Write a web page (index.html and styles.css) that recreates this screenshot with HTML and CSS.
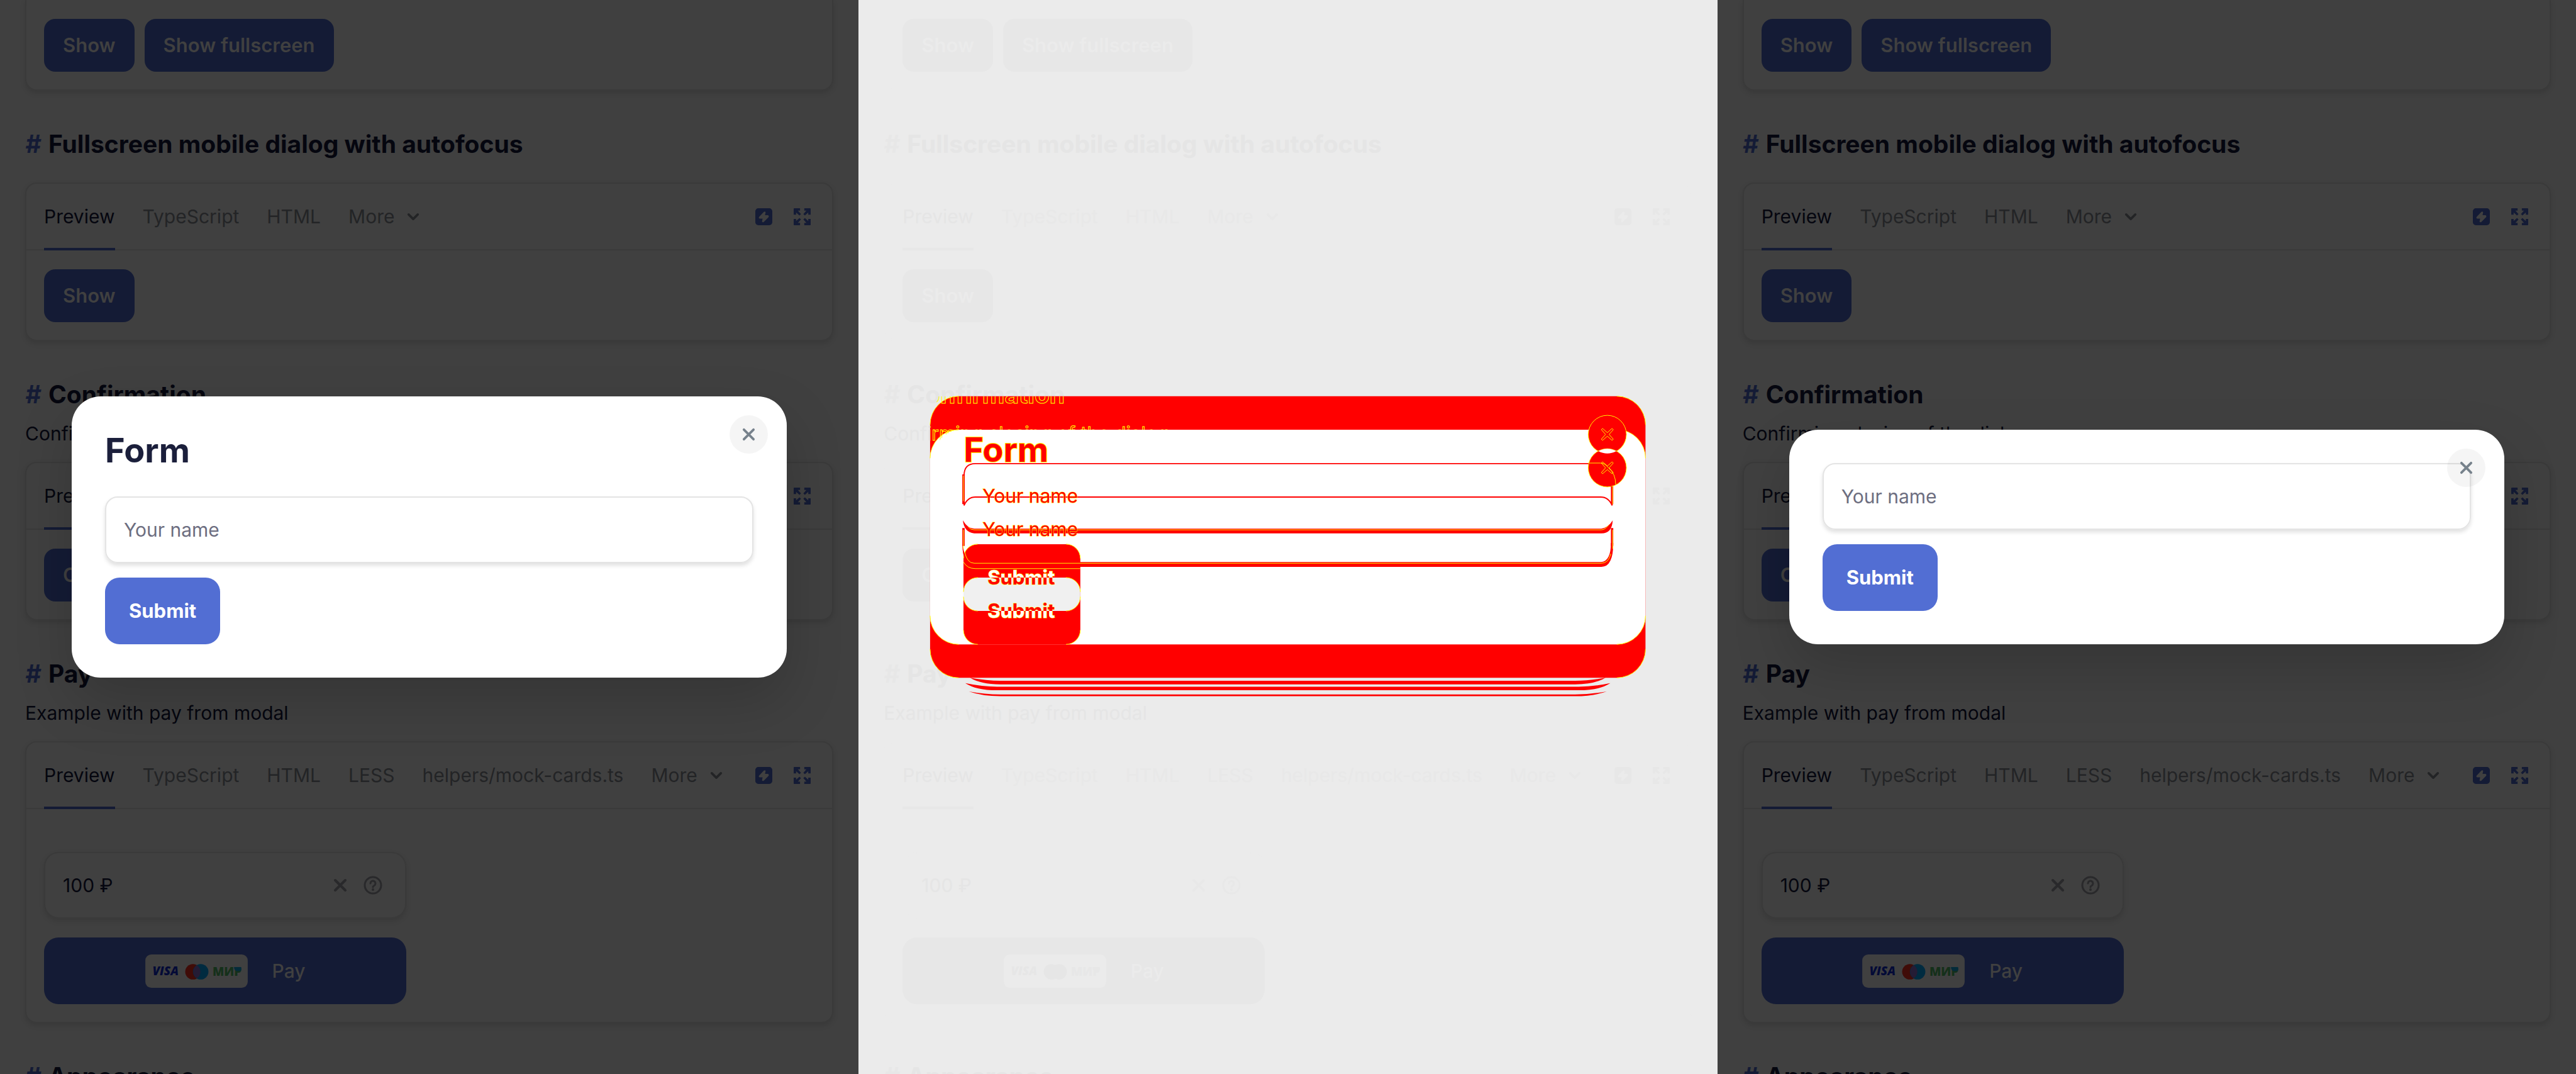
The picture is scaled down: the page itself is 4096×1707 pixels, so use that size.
FILE: index.html
```html
<!DOCTYPE html>
<html lang="en">
<head>
<meta charset="utf-8">
<title>Dialog – visual comparison</title>
<link rel="stylesheet" href="styles.css">
</head>
<body>
<svg class="sprite" aria-hidden="true">
  <symbol id="i-bolt" viewBox="0 0 28 28"><path fill-rule="evenodd" d="M5 0h18a5 5 0 0 1 5 5v18a5 5 0 0 1-5 5H5a5 5 0 0 1-5-5V5a5 5 0 0 1 5-5zM14 6 6 14.500q-1 2 1 2.500h5l-1 5q1 2 3 .5l8-8q1-2-1-3h-5l1-5q-1-2-3-.5z"/></symbol>
  <symbol id="i-expand" viewBox="0 0 28 28"><g id="arrow"><path d="M1 0h9.500v4H7l5 5.500-2.500 2.500L4 7v3.500H0V1a1 1 0 0 1 1-1z"/></g><use href="#arrow" transform="matrix(-1 0 0 1 28 0)"/><use href="#arrow" transform="matrix(1 0 0 -1 0 28)"/><use href="#arrow" transform="matrix(-1 0 0 -1 28 28)"/></symbol>
  <symbol id="i-chevron" viewBox="0 0 22 14"><path d="M3 3l8 8 8-8" fill="none" stroke="currentColor" stroke-width="4" stroke-linecap="round" stroke-linejoin="round"/></symbol>
  <symbol id="i-close" viewBox="0 0 22 22"><path d="M3 3l16 16M19 3L3 19" fill="none" stroke="currentColor" stroke-width="4" stroke-linecap="round"/></symbol>
  <symbol id="i-help" viewBox="0 0 30 30"><g fill="none" stroke="currentColor" stroke-width="3" stroke-linecap="round"><circle cx="15" cy="15" r="13"/><path d="M11 12a4 4 0 1 1 6 3.500q-2 1-2 2.500"/></g><circle cx="15" cy="22" r="2"/></symbol>
</svg>

<template id="docs-page">
  <section class="card card-cut">
    <div class="card-body">
      <button class="btn">Show</button>
      <button class="btn">Show fullscreen</button>
    </div>
  </section>

  <h2 class="title"><a class="hash" href="#autofocus">#</a>Fullscreen mobile dialog with autofocus</h2>
  <section class="card">
    <header class="card-head">
      <button class="tab tab-active">Preview</button>
      <button class="tab">TypeScript</button>
      <button class="tab">HTML</button>
      <button class="tab">More <svg class="chevron"><use href="#i-chevron"/></svg></button>
      <div class="tools">
        <button class="tool" aria-label="Edit"><svg><use href="#i-bolt"/></svg></button>
        <button class="tool" aria-label="Fullscreen"><svg><use href="#i-expand"/></svg></button>
      </div>
    </header>
    <div class="card-body"><button class="btn">Show</button></div>
  </section>

  <h2 class="title title-tight"><a class="hash" href="#confirmation">#</a>Confirmation</h2>
  <p class="lead">Confirming closing of the dialog</p>
  <section class="card">
    <header class="card-head">
      <button class="tab tab-active">Preview</button>
      <button class="tab">TypeScript</button>
      <button class="tab">HTML</button>
      <button class="tab">More <svg class="chevron"><use href="#i-chevron"/></svg></button>
      <div class="tools">
        <button class="tool" aria-label="Edit"><svg><use href="#i-bolt"/></svg></button>
        <button class="tool" aria-label="Fullscreen"><svg><use href="#i-expand"/></svg></button>
      </div>
    </header>
    <div class="card-body"><button class="btn">Open</button></div>
  </section>

  <h2 class="title title-tight"><a class="hash" href="#pay">#</a>Pay</h2>
  <p class="lead">Example with pay from modal</p>
  <section class="card">
    <header class="card-head">
      <button class="tab tab-active">Preview</button>
      <button class="tab">TypeScript</button>
      <button class="tab">HTML</button>
      <button class="tab">LESS</button>
      <button class="tab">helpers/mock-cards.ts</button>
      <button class="tab">More <svg class="chevron"><use href="#i-chevron"/></svg></button>
      <div class="tools">
        <button class="tool" aria-label="Edit"><svg><use href="#i-bolt"/></svg></button>
        <button class="tool" aria-label="Fullscreen"><svg><use href="#i-expand"/></svg></button>
      </div>
    </header>
    <div class="card-body pay-body">
      <div class="amount">
        <input class="amount-input" aria-label="Amount" value="100 ₽">
        <svg class="amount-clear"><use href="#i-close"/></svg>
        <svg class="amount-help"><use href="#i-help"/></svg>
      </div>
      <button class="btn pay-btn">
        <svg class="brands" viewBox="0 0 172 56" aria-hidden="true">
          <rect class="brands-bg" width="172" height="56" rx="10"/>
          <text class="visa" x="12" y="35">VISA</text>
          <circle class="mc-left" cx="80" cy="29" r="13"/>
          <circle class="mc-right" cx="93" cy="29" r="13"/>
          <path class="mc-mid" d="M86.500 18a13 13 0 0 1 0 22a13 13 0 0 1 0-22z"/>
          <text class="mir" x="113" y="36">МИР</text>
          <path class="mir-wing" d="M149 21h12q2 7-5 7h-3q-4-2-4-7z"/>
        </svg>
        Pay
      </button>
    </div>
  </section>

  <h2 class="title"><a class="hash" href="#appearance">#</a>Appearance</h2>
</template>

<main class="compare">
  <section class="panel panel-dark">
    <div class="docs"></div>
    <div class="overlay">
      <form class="dialog">
        <h1 class="dialog-title">Form</h1>
        <input class="field" placeholder="Your name" aria-label="Your name">
        <button class="submit" type="button">Submit</button>
        <button class="close" type="button" aria-label="Close"><svg><use href="#i-close"/></svg></button>
      </form>
    </div>
  </section>

  <section class="panel panel-diff">
    <div class="docs"></div>
    <svg class="diff" viewBox="0 0 1365 1707" preserveAspectRatio="xMidYMid meet">
      <defs>
        <clipPath id="title-clip"><rect x="124" y="630" width="500" height="30"/></clipPath>
        <clipPath id="lead-clip"><path d="M114 670H640V683H160Q134 687 124 708H114z"/></clipPath>
        <linearGradient id="submit-upper" gradientUnits="userSpaceOnUse" x1="0" y1="917" x2="0" y2="919"><stop offset=".5" stop-color="#fff"/><stop offset=".5" stop-color="#f00"/></linearGradient>
        <linearGradient id="submit-lower" gradientUnits="userSpaceOnUse" x1="0" y1="970" x2="0" y2="972"><stop offset=".5" stop-color="#f00"/><stop offset=".5" stop-color="#fff"/></linearGradient>
      </defs>
      <svg viewBox="0 0 1440 1800" width="1365" height="1707">
        <rect class="red" x="120" y="664" width="1200" height="472" rx="48"/>
        <rect class="white" x="120" y="720" width="1200" height="360" rx="48"/>
        <path class="edge" d="M120 712a48 48 0 0 1 48-48M1272 664a48 48 0 0 1 48 48M120 1088a48 48 0 0 0 48 48M1272 1136a48 48 0 0 0 48-48M120 768a48 48 0 0 1 48-48M1272 720a48 48 0 0 1 48 48M120 1032a48 48 0 0 0 48 48M1272 1080a48 48 0 0 0 48-48"/>
        <path class="red" d="M187 1136Q215 1141 238 1141H1202Q1225 1141 1253 1136Q1235 1147 1202 1147H238Q205 1147 187 1136zM179 1145Q208 1151 232 1151H1208Q1232 1151 1261 1145Q1243 1157 1208 1157H232Q197 1157 179 1145zM185 1159Q212 1164 238 1164H1202Q1228 1164 1255 1159Q1232 1167 1202 1167H238Q208 1167 185 1159z"/>
        <path class="red" d="M200 912H348a24 24 0 0 1 24 24V1056a24 24 0 0 1-24 24H200a24 24 0 0 1-24-24V936a24 24 0 0 1 24-24z"/>
        <rect class="grey" x="176" y="968" width="196" height="56" rx="24"/>
        <path class="edge" d="M176 936a24 24 0 0 1 24-24M348 912a24 24 0 0 1 24 24M176 992a24 24 0 0 1 24-24M348 968a24 24 0 0 1 24 24M176 1000a24 24 0 0 0 24 24M348 1024a24 24 0 0 0 24-24M176 1056a24 24 0 0 0 24 24M348 1080a24 24 0 0 0 24-24M176 942q6 11 20 11H372"/>
        <circle class="red edge-on" cx="1256" cy="728" r="32"/>
        <circle class="red edge-on" cx="1256" cy="784" r="32"/>
        <path class="white" d="M1241 756Q1256 748 1271 756Q1256 764 1241 756z"/>
        <path class="line" d="M177 847V797Q177 777 196 777H1225"/>
        <path class="line" d="M177 847Q183 833 196 833H1245Q1258 833 1264 847V815"/>
        <path class="line-thick" d="M176 795V845M1264 815V845M176 885V915M1264 885V915"/>
        <path class="red" d="M175 872Q183 886 194 886H1246Q1258 884 1265 872Q1264 894 1246 894H194Q177 892 175 872z"/>
        <path class="red" d="M174 910Q178 942 194 942H1246Q1262 940 1262 910H1266Q1266 950 1246 950H194Q174 948 174 910z"/>
        <path class="edge" d="M176 797V840M1265 815V845M176 888V920M1265 888V920M184 883Q188 888 194 888H1246Q1252 888 1258 880M178 925Q182 944 194 944H1246Q1258 944 1262 928M1224 776H1244Q1252 776 1258 784Q1270 794 1270 812"/>
        <path class="edge" id="cross" d="M1248 718L1256 725L1264 718L1266 720L1259 728L1266 736L1264 738L1256 731L1248 738L1246 736L1253 728L1246 720z"/>
        <use href="#cross" y="56"/>
      </svg>
      <text class="ghost ghost-title" x="77" y="641" clip-path="url(#title-clip)">Confirmation</text>
      <text class="ghost ghost-lead" x="40" y="700" clip-path="url(#lead-clip)">Confirming closing of the dialog</text>
      <text class="diff-title" x="167" y="734">Form</text>
      <text class="diff-name" x="197" y="799">Your name</text>
      <text class="diff-name" x="197" y="852">Your name</text>
      <text class="diff-submit" fill="url(#submit-upper)" x="205" y="929">Submit</text>
      <text class="diff-submit" fill="url(#submit-lower)" x="205" y="982">Submit</text>
    </svg>
  </section>

  <section class="panel panel-dark">
    <div class="docs"></div>
    <div class="overlay">
      <form class="dialog">
        <input class="field" placeholder="Your name" aria-label="Your name">
        <button class="submit" type="button">Submit</button>
        <button class="close" type="button" aria-label="Close"><svg><use href="#i-close"/></svg></button>
      </form>
    </div>
  </section>
</main>
<script src="script.js"></script>
</body>
</html>
```
FILE: script.js
```js
// Every panel shows the same documentation page.
const page = document.getElementById('docs-page');
document.querySelectorAll('.docs').forEach(el => el.append(page.content.cloneNode(true)));
```
FILE: styles.css
```css
* { box-sizing: border-box; }
body { margin: 0; font-family: Inter, "Noto Sans", sans-serif; font-size: 30px; line-height: 38px; }
button, input { font: inherit; color: inherit; border: 0; margin: 0; padding: 0; background: none; }
.sprite { display: none; }
svg { fill: currentColor; }

.compare { display: grid; grid-template-columns: repeat(3, 1fr); height: 100vh; overflow: hidden; }
.panel { position: relative; overflow: hidden; background: var(--bg); color: var(--text); }
.panel-dark {
  --bg: #404040; --text: #05060f; --muted: #232426; --line: #3a3a3a; --accent: #141b35; --on-accent: #404040;
  --shadow: 0 4px 8px rgba(0, 0, 0, .12); --icon: #29292b;
  --visa: #030a36; --mc-left: #400c08; --mc-right: #002b40; --mc-mid: #241c35; --mir: #15301a; --wing: #042b3a;
}
.panel-diff {
  --bg: #ebebeb; --text: #e5e5e5; --muted: #e8e8e8; --line: #ebebeb; --accent: #e7e7e7; --on-accent: #ebebeb;
  --shadow: none; --icon: #e8e8e8;
  --visa: #e6e6e6; --mc-left: #e6e6e6; --mc-right: #e6e6e6; --mc-mid: #e6e6e6; --mir: #e7e7e7; --wing: #e7e7e7;
}
.docs { padding: 0 40px; }

.card { border: 2px solid var(--line); border-radius: 18px; box-shadow: var(--shadow); }
.card-cut { border-top: 0; border-radius: 0 0 18px 18px; }
.card-head { display: flex; align-items: stretch; gap: 44px; height: 106px; padding: 0 34px 0 28px; border-bottom: 2px solid var(--line); }
.card-body { display: flex; gap: 16px; padding: 30px 28px 28px; }
.tab { display: flex; align-items: center; gap: 20px; padding-top: 2px; color: var(--muted); white-space: nowrap; margin-bottom: -2px; border-bottom: 4px solid transparent; }
.tab-active { color: var(--text); border-color: var(--accent); }
.chevron { width: 20px; height: 13px; }
.tools { display: flex; align-items: center; gap: 34px; margin-left: auto; color: var(--accent); }
.tool { display: flex; }
.tool svg { width: 27px; height: 27px; }

.btn { height: 84px; padding: 0 30px; border-radius: 18px; background: var(--accent); color: var(--on-accent); font-size: 31px; font-weight: 600; }
.title { margin: 61px 0 37px; font-size: 39px; line-height: 48px; font-weight: 700; white-space: nowrap; }
.title-tight { margin-bottom: 19px; }
.hash { display: inline-block; width: 37px; color: var(--accent); text-decoration: none; font-style: italic; }
.lead { margin: 0 0 26px; }

.pay-body { flex-direction: column; gap: 30px; padding-top: 68px; }
.amount, .pay-btn { width: 576px; height: 106px; border-radius: 23px; }
.amount { display: flex; align-items: center; gap: 26px; padding: 0 36px 0 28px; border: 2px solid var(--line); box-shadow: var(--shadow); color: var(--icon); }
.amount-input { flex: 1; min-width: 0; color: var(--text); }
.amount-clear { width: 22px; height: 22px; }
.amount-help { width: 30px; height: 30px; }
.pay-btn { display: flex; align-items: center; justify-content: center; gap: 39px; font-size: 30px; font-weight: 500; }
.brands { width: 163px; height: 53px; }
.brands-bg { fill: var(--on-accent); }
.visa, .mir { font-family: "Open Sans", sans-serif; font-weight: 800; font-size: 20px; }
.visa { fill: var(--visa); font-style: italic; }
.mir { fill: var(--mir); }
.mc-left { fill: var(--mc-left); }
.mc-right { fill: var(--mc-right); }
.mc-mid { fill: var(--mc-mid); }
.mir-wing { fill: var(--wing); }

.overlay { position: absolute; inset: 0; display: flex; align-items: center; padding: 0 114px; }
.dialog { position: relative; flex: 1; display: flex; flex-direction: column; align-items: flex-start; padding: 53px; border-radius: 46px; background: #fff; box-shadow: 0 38px 90px rgba(0, 0, 0, .17); }
.dialog-title { margin: 0 0 40px; font-size: 54px; line-height: 66px; font-weight: 700; color: #1b1f3b; }
.field { width: 100%; height: 106px; margin-bottom: 23px; padding: 0 28px; border: 2px solid #e4e4e4; border-radius: 20px; box-shadow: 0 4px 6px rgba(0, 0, 0, .12); }
.field::placeholder { color: #6d6e80; opacity: 1; }
.submit { height: 106px; padding: 0 38px; border-radius: 23px; background: #526ed3; color: #fff; font-size: 31px; font-weight: 700; }
.close { position: absolute; top: 30px; right: 30px; display: flex; align-items: center; justify-content: center; width: 61px; height: 61px; border-radius: 50%; background: rgba(0, 0, 0, .04); color: #77828c; }
.close svg { width: 21px; height: 21px; }

.diff { position: absolute; inset: 0; width: 100%; height: 100%; }
.red { fill: #f00; }
.white { fill: #fff; }
.grey { fill: #f0f0f0; }
.edge { fill: none; stroke: #ff0; stroke-width: 1; }
.edge-on { stroke: #ff0; stroke-width: 1; }
.line { fill: none; stroke: #f00; stroke-width: 2; }
.line-thick { fill: none; stroke: #f00; stroke-width: 4; }
.ghost { fill: none; stroke: #ff0; stroke-width: 1; }
.ghost-title { font-size: 39px; font-weight: 700; }
.ghost-lead { font-size: 30px; }
.diff-title { font-size: 54px; font-weight: 700; fill: #f00; stroke: #ff0; stroke-width: 2; paint-order: stroke; }
.diff-name { font-size: 30px; fill: #f00; stroke: #ff0; stroke-width: 1; paint-order: stroke; }
.diff-submit { font-size: 31px; font-weight: 700; stroke: #ff0; stroke-width: 1; paint-order: stroke; }
```
